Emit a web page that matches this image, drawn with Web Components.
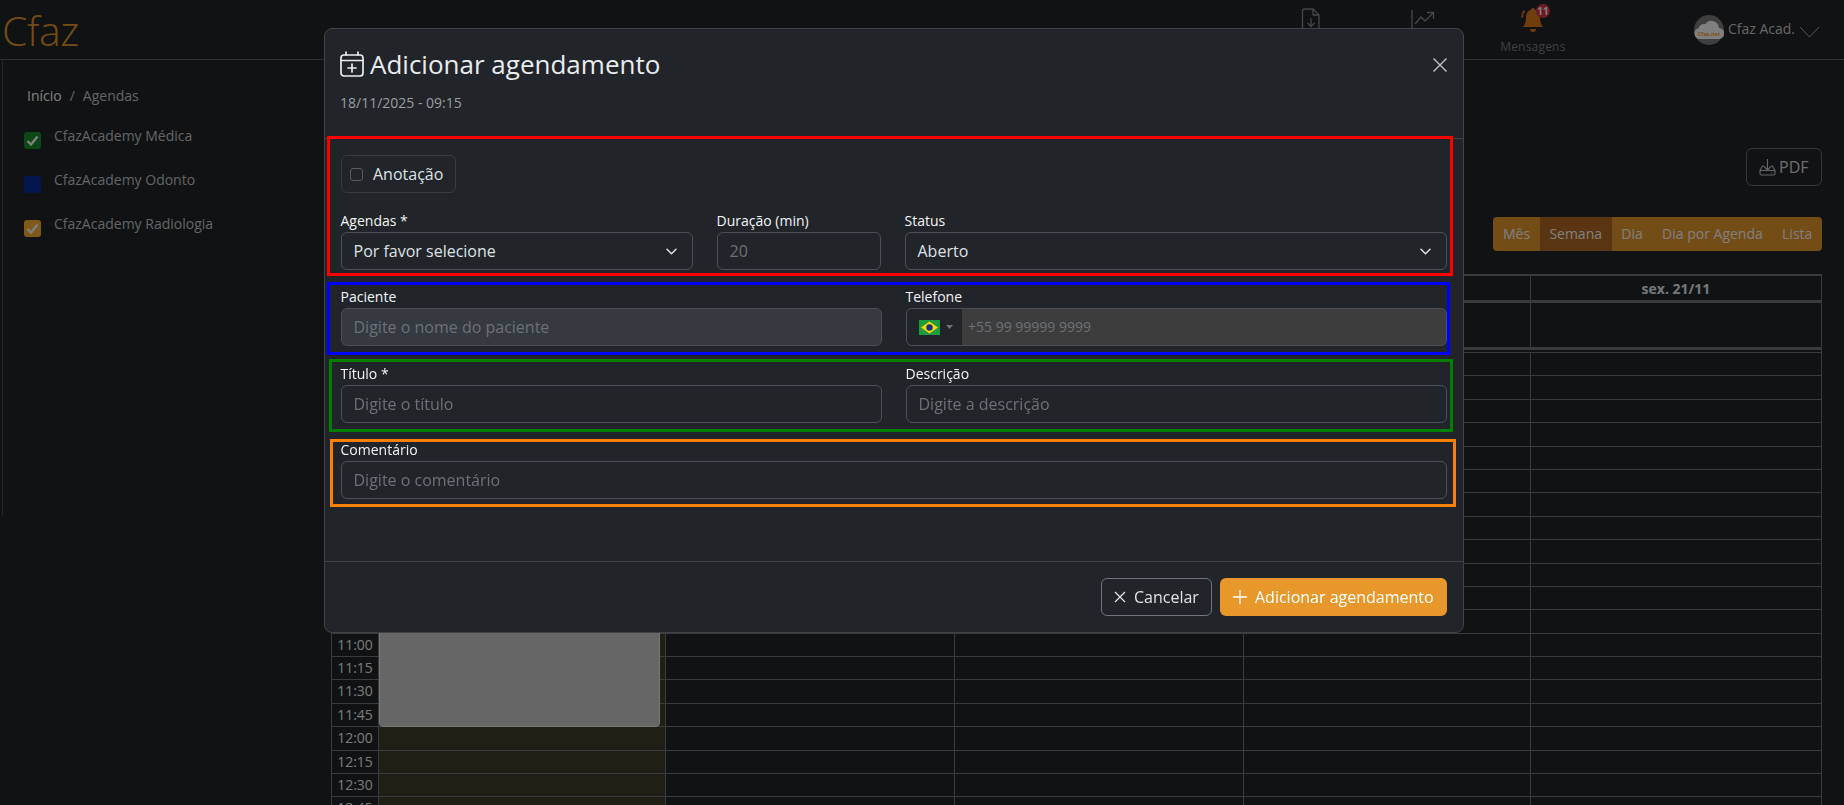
<!DOCTYPE html>
<html lang="pt-BR">
<head>
<meta charset="utf-8">
<title>Agendas</title>
<style>
html,body{margin:0;height:805px;overflow:hidden;background:#212529;color:#dee2e6;font-family:"Open Sans","Liberation Sans",sans-serif;font-size:14px}
.main{display:flex;align-items:flex-start}
</style>
</head>
<body>
<cf-header></cf-header>
<div class="main">
  <cf-sidebar></cf-sidebar>
  <cf-content></cf-content>
</div>
<cf-backdrop></cf-backdrop>
<cf-modal>
  <cf-form-grid cols="352px 164px 1fr" class="r1">
    <cf-field label="Agendas *"><cf-input kind="select">Por favor selecione</cf-input></cf-field>
    <cf-field label="Duração (min)"><cf-input kind="muted">20</cf-input></cf-field>
    <cf-field label="Status"><cf-input kind="select">Aberto</cf-input></cf-field>
  </cf-form-grid>
  <cf-form-grid cols="1fr 1fr">
    <cf-field label="Paciente"><cf-input kind="disabled">Digite o nome do paciente</cf-input></cf-field>
    <cf-field label="Telefone"><cf-phone>+55 99 99999 9999</cf-phone></cf-field>
  </cf-form-grid>
  <cf-form-grid cols="1fr 1fr">
    <cf-field label="Título *"><cf-input kind="muted">Digite o título</cf-input></cf-field>
    <cf-field label="Descrição"><cf-input kind="muted">Digite a descrição</cf-input></cf-field>
  </cf-form-grid>
  <cf-form-grid cols="1fr">
    <cf-field label="Comentário"><cf-input kind="muted">Digite o comentário</cf-input></cf-field>
  </cf-form-grid>
</cf-modal>
<script>
class Base extends HTMLElement{
  constructor(){super();this.attachShadow({mode:'open'}).innerHTML=this.render();}
  render(){return ''}
}
customElements.define('cf-header',class extends Base{render(){return `
<style>
:host{display:flex;align-items:stretch;height:59px;border-bottom:1px solid #5e6166;box-sizing:content-box}
.logo{font-weight:300;font-size:41px;line-height:60px;color:#e8982a;margin-left:2px;letter-spacing:-.4px}
nav{display:flex;margin-left:auto}
.item{display:flex;flex-direction:column;align-items:center;box-sizing:border-box;padding-top:8px}
.item svg{display:block}
.label{font-size:12px;line-height:16px;color:#7f8286;letter-spacing:.2px}
.bell{position:relative;padding-top:4px}
.bell .label{margin-top:5px}
.badge{position:absolute;left:56px;top:4px;width:14px;height:14px;border-radius:50%;background:#dc3545;color:#fff;font-size:10px;font-weight:700;line-height:14px;text-align:center}
.user{display:flex;align-items:center;margin:0 24px 0 108px;height:59px;color:#ccc;font-size:14px;gap:4px}
.name{margin:0 0 2px 0}
</style>
<div class="logo">Cfaz</div>
<nav>
 <div class="item" style="width:113px"><svg width="20" height="22" viewBox="0 0 20 22" fill="none" stroke="#8a8d90" stroke-width="1.3" stroke-linejoin="round"><path d="M3 1h9l6 6v13a1.5 1.5 0 0 1-1.500 1.500H3A1.500 1.500 0 0 1 1.500 20V2.500A1.500 1.500 0 0 1 3 1z"/><path d="M12 1v6h6M10 10v8M6.500 15l3.500 3.500 3.500-3.500"/></svg></div>
 <div class="item" style="width:112px;padding-top:9px"><svg width="24" height="20" viewBox="0 0 24 20" fill="none" stroke="#8a8d90" stroke-width="1.300" style="margin-left:-2px"><path d="M1 1v19M4 15l6-7 4 4 8-8M16 3.500h6.500V10"/></svg></div>
 <div class="item bell" style="width:106px">
  <svg width="26" height="30" viewBox="0 0 26 30"><path fill="#e07a1f" d="M13 4c-1.200 0-2 .8-2 1.800C7.500 6.800 6 10 6 14c0 4-1 6.500-3 9h20c-2-2.500-3-5-3-9 0-4-1.500-7.200-5-8.200C15 4.800 14.200 4 13 4zM10 25h6a3 3 0 0 1-6 0z"/><path fill="none" stroke="#e07a1f" stroke-width="1.800" d="M4.500 6.500C2.800 8.500 2 11 2 13.500"/></svg>
  <span class="badge">11</span>
  <span class="label">Mensagens</span>
 </div>
</nav>
<div class="user">
 <svg width="30" height="30" viewBox="0 0 30 30"><circle cx="15" cy="15" r="15" fill="#7e7e7e"/><path fill="#fff" d="M6 24a5.500 5.500 0 0 1-1.500-10.800 5.500 5.500 0 0 1 6.800-4A7.500 7.500 0 0 1 25 13a5.500 5.500 0 0 1-.5 11z"/><text x="15" y="20.500" text-anchor="middle" font-size="5.500" font-family="Open Sans" font-weight="700" fill="#ffa020">Cfaz.net</text></svg>
 <span class="name">Cfaz Acad.</span>
 <svg width="21" height="12" viewBox="0 0 21 12" fill="none" stroke="#aaa" stroke-width="1" style="margin-top:4px"><path d="M1 1l9.500 10L20 1"/></svg>
</div>`}});
customElements.define('cf-sidebar',class extends Base{render(){
 const rows=[['#188e2c',1,'CfazAcademy Médica'],['#0a2a9e',0,'CfazAcademy Odonto'],['#ffb334',1,'CfazAcademy Radiologia']];
 return `
<style>
:host{display:block;flex:none;width:331px;height:745px;box-sizing:border-box;padding:26px 0 0 27px;background:linear-gradient(#4a4d52,#4a4d52) 2px 0/1px 456px no-repeat}
.crumb{display:flex;gap:8px;line-height:20px;color:#fff;font-size:14px}
.crumb span+span{color:#c6c9cd}
ul{list-style:none;margin:23px 0 0 -3px;padding:0;display:flex;flex-direction:column;gap:24px}
li{display:flex;gap:13px;color:#c6c9cd;line-height:17px;font-size:14px}
.box{flex:none;width:17px;height:17px;border-radius:3px;margin-top:3px}
svg{display:block}
li span{margin-top:-5px;line-height:24px}
</style>
<div class="crumb"><span>Início</span><span>/</span><span>Agendas</span></div>
<ul>${rows.map(r=>`<li><div class="box" style="background:${r[0]}">${r[1]?'<svg width="17" height="17" viewBox="0 0 17 17"><path d="M3.500 9l3.500 3.500 6.500-8" fill="none" stroke="#fff" stroke-width="2.400"/></svg>':''}</div><span>${r[2]}</span></li>`).join('')}</ul>`}});
customElements.define('cf-content',class extends Base{render(){return `
<style>
:host{display:flex;flex-direction:column;align-items:flex-end;flex:1;padding:88px 22px 0 0;box-sizing:border-box;min-width:0}
.pdf{display:flex;align-items:center;gap:3px;box-sizing:border-box;width:76px;height:38px;border:1px solid #6c7077;border-radius:6px;padding-left:12px;color:#dcdcdc;font-size:16px}
.seg{display:flex;height:34px;margin-top:31px;background:#e8982a;border-radius:4px;overflow:hidden;color:#fff;font-size:14px;line-height:34px}
.seg span{padding:0 9.650px;white-space:nowrap}
.seg .on{background:#b46a24}
cf-calendar{margin-top:23px}
</style>
<div class="pdf"><svg width="17" height="17" viewBox="0 0 17 17" fill="none" stroke="#c9ccd0" stroke-width="1.100"><path d="M8.500 0v11M5 7.500l3.500 3.500L12 7.500M5 7H3.500L1 11.500v3A1.500 1.500 0 0 0 2.500 16h12a1.500 1.500 0 0 0 1.500-1.500v-3L13.500 7H12M1 11.500h15M12.500 14h1"/></svg>PDF</div>
<div class="seg"><span>Mês</span><span class="on">Semana</span><span>Dia</span><span>Dia por Agenda</span><span>Lista</span></div>
<cf-calendar></cf-calendar>`}});
customElements.define('cf-calendar',class extends Base{render(){
 const cols='47px 287px 289px 289px 287px 291px';
 const cells=(i,t)=>`<div class="c t">${t||''}</div><div class="c today"></div><div class="c"></div><div class="c"></div><div class="c"></div><div class="c"></div>`;
 let slots='';
 const lab=['','','','','','','','','','','','','11:00','11:15','11:30','11:45','12:00','12:15','12:30','12:45'];
 lab.forEach((t,i)=>slots+=cells(i,t));
 return `
<style>
:host{display:block;width:1491px;position:relative;border-right:1px solid #74767e;box-sizing:border-box}
.grid{display:grid;grid-template-columns:${cols}}
.head{border-top:2px solid #74767e;height:24px;border-bottom:3px solid #74767e}
.head .c{line-height:25px;font-weight:700;color:#eee;text-align:center;height:24px}
.all{height:44px;border-bottom:3px solid #74767e}
.all .c{height:44px}
.gap{height:2px}
.slots{grid-auto-rows:23.4px;border-top:1px solid #74767e}
.c{border-left:1px solid #74767e;box-sizing:border-box;font-size:14px;min-width:0}
.slots .c{border-bottom:1px solid #74767e}
.t{color:#f2f2f2;text-align:center;line-height:22px}
.today{background:#3e3e2a}
.evt{position:absolute;left:48px;width:281px;top:195px;height:258px;background:#ccc;border:1px solid #eee;border-radius:0 0 4px 4px;box-sizing:border-box}
</style>
<div class="grid head"><div class="c"></div><div class="c"></div><div class="c"></div><div class="c"></div><div class="c"></div><div class="c">sex. 21/11</div></div>
<div class="grid all"><div class="c"></div><div class="c today"></div><div class="c"></div><div class="c"></div><div class="c"></div><div class="c"></div></div>
<div class="gap"></div>
<div class="grid slots">${slots}</div>
<div class="evt"></div>`}});
customElements.define('cf-backdrop',class extends Base{render(){return `<style>:host{position:fixed;inset:0;background:rgba(0,0,0,.5);display:block}</style>`}});
customElements.define('cf-modal',class extends Base{render(){return `
<style>
:host{position:fixed;left:324px;top:28px;width:1140px;height:605px;box-sizing:border-box;background:#212529;border:1px solid #3f4347;border-radius:8px;display:flex;flex-direction:column;color:#dee2e6}
.hd{height:110px;box-sizing:border-box;border-bottom:1px solid #3f4347;padding:15px 15px 0 15px;position:relative;flex:none}
.ttl{display:flex;align-items:center;gap:6px;font-size:26px;line-height:40px;color:#e9ecef}
.date{font-size:14px;line-height:20px;color:#9a9da1;margin-top:9px}
.x{position:absolute;right:15px;top:28px}
.body{flex:1;padding:16px;min-height:0}
.note{display:inline-flex;align-items:center;gap:10px;height:38px;box-sizing:border-box;border:1px solid #373b3e;border-radius:6px;padding:0 12px 0 8px;font-size:16px;margin-bottom:18px;vertical-align:top;color:#dee2e6}
.cb{width:13px;height:13px;box-sizing:border-box;border:1px solid #565b60;border-radius:3px}
.ft{flex:none;border-top:1px solid #3f4347;height:71px;box-sizing:border-box;padding:16px;display:flex;justify-content:flex-end;gap:8px}
.btn{display:flex;align-items:center;height:38px;box-sizing:border-box;border-radius:6px;font-size:16px;white-space:nowrap}
.cancel{width:111px;border:1px solid #6c757d;padding-left:12px;gap:8px;color:#dee2e6}
.add{width:227px;background:#e8982a;color:#fff;padding-left:13px;gap:8px}
.mark{position:absolute;box-sizing:border-box;border:3px solid;pointer-events:none}
</style>
<div class="hd">
 <div class="ttl"><svg width="24" height="26" viewBox="0 0 24 26" fill="none" stroke="#e9ecef" stroke-width="1.700" stroke-linecap="round"><rect x="1" y="4" width="22" height="21" rx="3"/><path d="M1 9.500h22M6 1v3M18 1v3M12 13v8M8 17h8"/></svg><span>Adicionar agendamento</span></div>
 <div class="date">18/11/2025 - 09:15</div>
 <svg class="x" width="16" height="16" viewBox="0 0 16 16" stroke="#c2c4c6" stroke-width="1.400"><path d="M1.500 1.500l13 13M14.500 1.500l-13 13"/></svg>
</div>
<div class="body">
 <div class="note"><div class="cb"></div><span>Anotação</span></div>
 <slot></slot>
</div>
<div class="ft">
 <div class="btn cancel"><svg width="12" height="12" viewBox="0 0 12 12" stroke="#dee2e6" stroke-width="1.300"><path d="M1 1l10 10M11 1L1 11"/></svg><span>Cancelar</span></div>
 <div class="btn add"><svg width="14" height="14" viewBox="0 0 14 14" stroke="#fff" stroke-width="1.300"><path d="M7 0v14M0 7h14"/></svg><span>Adicionar agendamento</span></div>
</div>
<div class="mark" style="left:2px;top:107px;width:1126px;height:140px;border-color:#f00"></div>
<div class="mark" style="left:2px;top:253px;width:1123px;height:73px;border-color:#00f"></div>
<div class="mark" style="left:4px;top:330px;width:1124px;height:73px;border-color:#008000"></div>
<div class="mark" style="left:5px;top:410px;width:1126px;height:68px;border-color:#ff8000"></div>`}});
customElements.define('cf-form-grid',class extends Base{render(){return `
<style>:host{display:grid;grid-template-columns:${this.getAttribute('cols')||'1fr'};column-gap:24px;margin-bottom:17.330px}</style><slot></slot>`}});
customElements.define('cf-field',class extends Base{render(){return `
<style>
:host{display:block;min-width:0}
label{display:block;font-size:14px;line-height:20px;margin:0 0 1px -.5px;color:#f2f4f6;font-weight:500}
</style><label>${this.getAttribute('label')}</label><slot></slot>`}});
customElements.define('cf-input',class extends Base{render(){
 const k=this.getAttribute('kind');
 const sel=k==='select';
 return `
<style>
:host{display:flex;align-items:center;justify-content:space-between;height:38px;box-sizing:border-box;border:1px solid #495057;border-radius:6px;padding:0 12px 0 11.500px;font-size:16px;white-space:nowrap;
 color:${sel?'#dee2e6':'#6c7177'};background:${k==='disabled'?'#343a40':'transparent'}}
svg{display:block;margin-right:3px}
</style><slot></slot>${sel?'<svg width="11" height="7" viewBox="0 0 11 7" fill="none" stroke="#dee2e6" stroke-width="1.500" stroke-linecap="round" stroke-linejoin="round"><path d="M1 1.200l4.500 4.500 4.500-4.500"/></svg>':''}`}});
customElements.define('cf-phone',class extends Base{render(){return `
<style>
:host{display:flex;height:38px;box-sizing:border-box;border:1px solid #495057;border-radius:6px;overflow:hidden;background:#3d3d3d;color:#6c7177;font-size:14px;line-height:36px}
.flag{flex:none;width:55px;background:#212529;display:flex;align-items:center;padding-left:12px;box-sizing:border-box;gap:6px}
.ph{padding-left:6px}
svg{display:block}
</style>
<div class="flag"><svg width="21" height="15" viewBox="0 0 21 15"><rect width="21" height="15" fill="#1f9a3f"/><path d="M10.500 1.500L19 7.500l-8.500 6-8.500-6z" fill="#f5d90a"/><circle cx="10.500" cy="7.500" r="3.200" fill="#16307a"/></svg><svg width="7" height="4" viewBox="0 0 7 4"><path d="M0 0h7L3.500 4z" fill="#6f7377"/></svg></div>
<span class="ph"><slot></slot></span>`}});
</script>
</body>
</html>
